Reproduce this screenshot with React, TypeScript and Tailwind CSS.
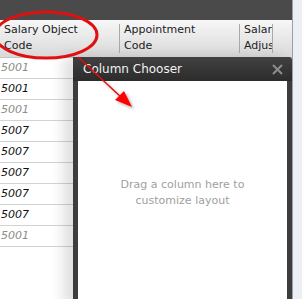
import React from 'react';

const rows = [
  { code: '5001', muted: true },
  { code: '5001', muted: false },
  { code: '5001', muted: true },
  { code: '5007', muted: false },
  { code: '5007', muted: false },
  { code: '5007', muted: false },
  { code: '5007', muted: false },
  { code: '5007', muted: false },
  { code: '5001', muted: true },
];

const HeaderCell: React.FC<{ width: string; lines: string[] }> = ({ width, lines }) => (
  <div className={`${width} h-full flex`}>
    <div className="flex-1 pt-[2px] pl-[4px] text-[11px] leading-[16px] text-[#222] whitespace-nowrap overflow-hidden">
      {lines.map((l) => (
        <div key={l}>{l}</div>
      ))}
    </div>
    <div className="w-px my-[4px] bg-[#a9a9a9]" />
  </div>
);

const App: React.FC = () => {
  return (
    <div className="relative w-[302px] h-[299px] overflow-hidden bg-white font-['DejaVu_Sans',sans-serif]">
      <div className="flex h-full">
        <div className="w-[292px] flex flex-col">
          <div className="h-[20px] bg-[#4a4a4a]" />
          <div className="h-[38px] flex bg-gradient-to-b from-[#f7f7f7] to-[#d9d9d9] border-b border-[#c4c4c4]">
            <HeaderCell width="w-[120px]" lines={['Salary Object', 'Code']} />
            <HeaderCell width="w-[120px]" lines={['Appointment', 'Code']} />
            <HeaderCell width="w-[33px]" lines={['Salary', 'Adjustment']} />
          </div>
          <div className="flex flex-col">
            {rows.map((r, i) => (
              <div
                key={i}
                className={`h-[21px] flex items-center pl-[1px] border-b border-[#d3d3d3] text-[11px] italic ${
                  r.muted ? 'text-[#8c8c8c]' : 'text-[#111]'
                }`}
              >
                {r.code}
              </div>
            ))}
          </div>
        </div>
        <div className="flex-1 bg-[#eceff3] border-l border-[#9aa0a8]" />
      </div>

      {/* column chooser window */}
      <div className="absolute left-[73px] top-[57px] w-[219px] h-[250px] flex flex-col shadow-[-10px_0_12px_rgba(0,0,0,0.12)]">
        <div className="h-[24px] flex items-center justify-between pl-[10px] pr-[9px] bg-gradient-to-b from-[#414141] to-[#2c2c2c] rounded-tr-[3px]">
          <span className="text-[12px] text-[#f2f2f2]">Column Chooser</span>
          <svg width="11" height="11" viewBox="0 0 11 11">
            <path d="M1 1 L10 10 M10 1 L1 10" stroke="#8d8d8d" strokeWidth="2" />
          </svg>
        </div>
        <div className="flex-1 bg-white border-x-[5px] border-[#3d3d3d] flex justify-center">
          <p className="mt-[96px] text-center text-[11px] leading-[16px] text-[#a0a0a0]">
            Drag a column here to
            <br />
            customize layout
          </p>
        </div>
      </div>

      {/* annotation */}
      <svg className="absolute left-0 top-0" width="302" height="299" viewBox="0 0 302 299">
        <defs>
          <filter id="sh" x="-20%" y="-20%" width="140%" height="140%">
            <feDropShadow dx="2" dy="2" stdDeviation="1.5" floodColor="#000" floodOpacity="0.3" />
          </filter>
        </defs>
        <ellipse cx="46" cy="35" rx="51" ry="23" fill="none" stroke="#e01010" strokeWidth="3" />
        <g filter="url(#sh)">
          <line x1="78" y1="57" x2="122" y2="98" stroke="#e01010" strokeWidth="1.5" />
          <polygon points="132,107 115,100 124,91" fill="#f00" />
        </g>
      </svg>
    </div>
  );
};

export default App;
